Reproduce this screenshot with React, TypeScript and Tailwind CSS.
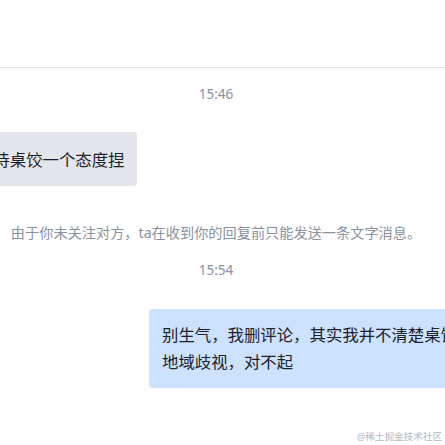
export default function App() {
  return (
    <div
      className="relative w-[445px] h-[445px] overflow-hidden bg-white text-[#1d2129]"
      style={{ fontFamily: '"Noto Sans", "Noto Sans CJK SC", sans-serif' }}
    >
      {/* header area */}
      <div className="h-[68px] border-b border-[#e4e6eb]" />

      <div className="-ml-[13px] w-[458px] flex flex-col">
        <div className="mt-[16px] text-center text-[13.5px] leading-[20px] text-[#8a919f]">15:46</div>

        {/* incoming message */}
        <div className="mt-[28px] w-[150px] flex justify-end">
          <div className="shrink-0 whitespace-nowrap rounded-[4px] bg-[#e4e6eb] px-[12.5px] py-[13.5px] text-[16.4px] leading-[27px]">
            就是对待桌饺一个态度捏
          </div>
        </div>

        <div className="mt-[37px] text-center text-[14.2px] leading-[20px] text-[#8a919f] whitespace-nowrap">
          由于你未关注对方，ta在收到你的回复前只能发送一条文字消息。
        </div>

        <div className="mt-[17px] text-center text-[13.5px] leading-[20px] text-[#8a919f]">15:54</div>

        {/* outgoing message */}
        <div className="mt-[29px] flex justify-start pl-[162px]">
          <div className="shrink-0 w-[420px] rounded-[4px] bg-[#cce2ff] px-[13px] py-[13px] text-[16.4px] leading-[26.5px] whitespace-nowrap">
            别生气，我删评论，其实我并不清楚桌饺算不算
            <br />
            地域歧视，对不起
          </div>
        </div>
      </div>

      <div className="absolute right-[3px] bottom-[1px] text-[9.6px] leading-[14px] text-[#b6b9c0]">
        @稀土掘金技术社区
      </div>
    </div>
  );
}
